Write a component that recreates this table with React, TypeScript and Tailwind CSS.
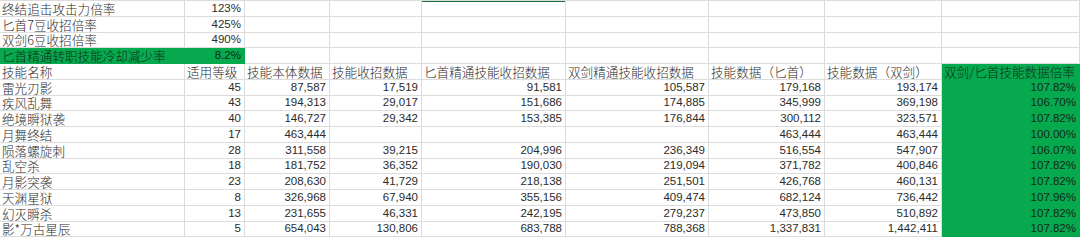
import React from "react";

type Cell = { t: string; num?: boolean; green?: boolean };

const cols = "grid-cols-[185px_60px_85px_92px_144px_143px_116px_117px_138px]";

const top: Cell[][] = [
  [{ t: "终结追击攻击力倍率" }, { t: "123%", num: true }],
  [{ t: "匕首7豆收招倍率" }, { t: "425%", num: true }],
  [{ t: "双剑6豆收招倍率" }, { t: "490%", num: true }],
  [
    { t: "匕首精通转职技能冷却减少率", green: true },
    { t: "8.2%", num: true, green: true },
  ],
];

const headers = [
  "技能名称",
  "适用等级",
  "技能本体数据",
  "技能收招数据",
  "匕首精通技能收招数据",
  "双剑精通技能收招数据",
  "技能数据（匕首）",
  "技能数据（双剑）",
  "双剑/匕首技能数据倍率",
];

const data: string[][] = [
  ["雷光刃影", "45", "87,587", "17,519", "91,581", "105,587", "179,168", "193,174", "107.82%"],
  ["疾风乱舞", "43", "194,313", "29,017", "151,686", "174,885", "345,999", "369,198", "106.70%"],
  ["绝境瞬狱袭", "40", "146,727", "29,342", "153,385", "176,844", "300,112", "323,571", "107.82%"],
  ["月舞终结", "17", "463,444", "", "", "", "463,444", "463,444", "100.00%"],
  ["陨落螺旋刺", "28", "311,558", "39,215", "204,996", "236,349", "516,554", "547,907", "106.07%"],
  ["乱空杀", "18", "181,752", "36,352", "190,030", "219,094", "371,782", "400,846", "107.82%"],
  ["月影突袭", "23", "208,630", "41,729", "218,138", "251,501", "426,768", "460,131", "107.82%"],
  ["天渊星狱", "8", "326,968", "67,940", "355,156", "409,474", "682,124", "736,442", "107.96%"],
  ["幻灭瞬杀", "13", "231,655", "46,331", "242,195", "279,237", "473,850", "510,892", "107.82%"],
  ["影*万古星辰", "5", "654,043", "130,806", "683,788", "788,368", "1,337,831", "1,442,411", "107.82%"],
];

function C({ t, num, green, topMark }: Cell & { topMark?: boolean }) {
  return (
    <div
      className={
        "relative flex items-center whitespace-nowrap border-r border-b " +
        (green ? "bg-[#07a94f] border-[#07a94f] text-[#0d2a17] " : "border-[#dcdcdc] text-[#2b2b2b] ") +
        (num
          ? "justify-end pr-[3px] text-[11.5px] [font-family:'Liberation_Sans',Arial,sans-serif] "
          : "justify-start pl-[2px] text-[12.6px] font-light [font-family:'Noto_Sans_CJK_SC','Noto_Sans',sans-serif] ")
      }
    >
      {topMark && <div className="absolute left-0 right-0 top-0 h-[1px] bg-[#1e6b3c]" />}
      <span className="leading-[13px]">{t}</span>
    </div>
  );
}

export default function App() {
  const rows: React.ReactNode[] = [];
  top.forEach((r, i) => {
    for (let c = 0; c < 9; c++) {
      const cell = r[c] ?? { t: "" };
      rows.push(<C key={`t${i}-${c}`} {...cell} topMark={i === 0 && c === 4} />);
    }
  });
  headers.forEach((h, c) => {
    rows.push(<C key={`h${c}`} t={h} green={c === 8} />);
  });
  data.forEach((r, i) => {
    r.forEach((v, c) => {
      rows.push(<C key={`d${i}-${c}`} t={v} num={c > 0} green={c === 8} />);
    });
  });
  return (
    <div className="w-[1080px] h-[241px] overflow-hidden bg-white">
      <div className={`grid ${cols} auto-rows-[15.75px] border-t border-[#dcdcdc]`}>{rows}</div>
    </div>
  );
}
